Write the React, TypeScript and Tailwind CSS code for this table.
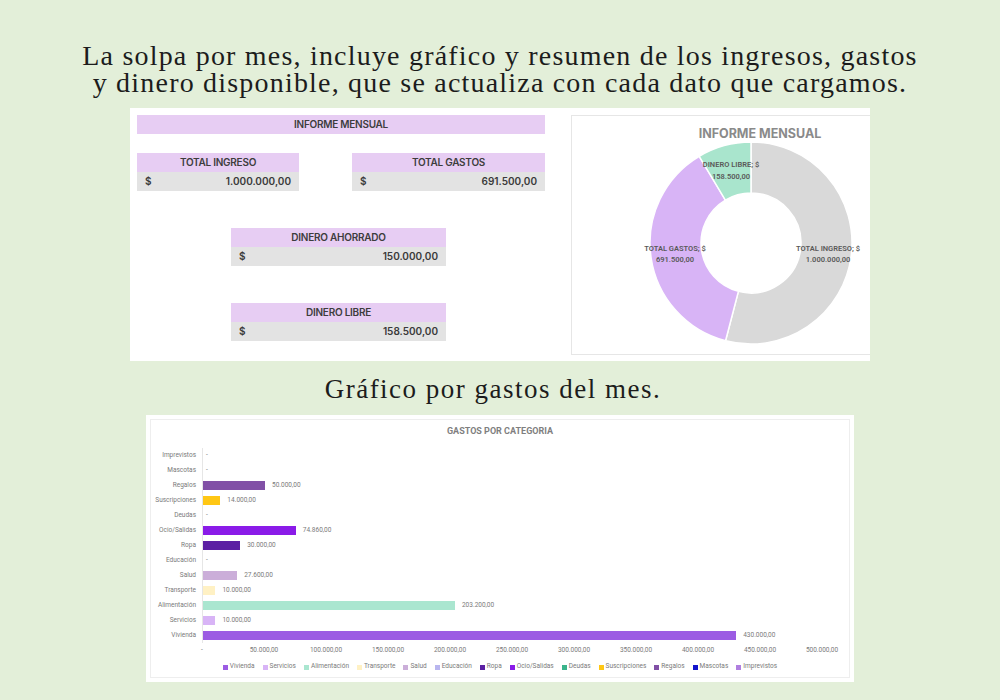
const categories = [
  { name: 'Imprevistos', value: 0, color: '#b07fe0' },
  { name: 'Mascotas', value: 0, color: '#1414cc' },
  { name: 'Regalos', value: 50000, color: '#8150a6' },
  { name: 'Suscripciones', value: 14000, color: '#ffc714' },
  { name: 'Deudas', value: 0, color: '#3bb48b' },
  { name: 'Ocio/Salidas', value: 74860, color: '#8a1be8' },
  { name: 'Ropa', value: 30000, color: '#5b1fa3' },
  { name: 'Educación', value: 0, color: '#b9b6ef' },
  { name: 'Salud', value: 27600, color: '#cbaed9' },
  { name: 'Transporte', value: 10000, color: '#fff1c4' },
  { name: 'Alimentación', value: 203200, color: '#aae6d0' },
  { name: 'Servicios', value: 10000, color: '#d8b4f6' },
  { name: 'Vivienda', value: 430000, color: '#9c5ce3' },
];

const ticks = [0, 50000, 100000, 150000, 200000, 250000, 300000, 350000, 400000, 450000, 500000];
const PX = 620 / 500000;

function fmt(n: number) {
  const int = Math.floor(n).toString().replace(/\B(?=(\d{3})+(?!\d))/g, '.');
  return `${int},00`;
}

function arcPath(cx: number, cy: number, r0: number, r1: number, a0: number, a1: number) {
  const pt = (r: number, a: number) => {
    const rad = (a * Math.PI) / 180;
    return [cx + r * Math.sin(rad), cy - r * Math.cos(rad)];
  };
  const large = a1 - a0 > 180 ? 1 : 0;
  const [x1, y1] = pt(r1, a0);
  const [x2, y2] = pt(r1, a1);
  const [x3, y3] = pt(r0, a1);
  const [x4, y4] = pt(r0, a0);
  return `M${x1} ${y1} A${r1} ${r1} 0 ${large} 1 ${x2} ${y2} L${x3} ${y3} A${r0} ${r0} 0 ${large} 0 ${x4} ${y4} Z`;
}

function Card({ title, value, className }: { title: string; value: string; className: string }) {
  return (
    <div className={className}>
      <div className="h-[19px] bg-[#e7cdf3] flex items-center justify-center text-[10px] font-semibold text-[#3d3d3d] tracking-tight">
        {title}
      </div>
      <div className="h-[19px] bg-[#e3e3e3] flex items-center justify-between px-[8px] text-[10px] font-semibold text-[#3a3a3a]">
        <span>$</span>
        <span>{value}</span>
      </div>
    </div>
  );
}

function Donut() {
  const total = 1000000 + 691500 + 158500;
  const a1 = (1000000 / total) * 360;
  const a2 = a1 + (691500 / total) * 360;
  const cx = 179;
  const cy = 127;
  return (
    <svg width="298" height="240" viewBox="0 0 298 240" className="block">
      <text x="188" y="22" textAnchor="middle" className="fill-[#8a8a8a] text-[12.5px] font-bold">
        INFORME MENSUAL
      </text>
      <path d={arcPath(cx, cy, 50, 101, 0, a1)} fill="#d9d9d9" stroke="#fff" strokeWidth="1.5" />
      <path d={arcPath(cx, cy, 50, 101, a1, a2)} fill="#d8b4f6" stroke="#fff" strokeWidth="1.5" />
      <path d={arcPath(cx, cy, 50, 101, a2, 360)} fill="#a9e5cd" stroke="#fff" strokeWidth="1.5" />
      <g className="fill-[#595959] text-[7.5px] font-semibold font-['Roboto',sans-serif]">
        <text x="256" y="135" textAnchor="middle">TOTAL INGRESO; $</text>
        <text x="256" y="146" textAnchor="middle">1.000.000,00</text>
        <text x="103" y="135" textAnchor="middle">TOTAL GASTOS; $</text>
        <text x="103" y="146" textAnchor="middle">691.500,00</text>
        <text x="159" y="51" textAnchor="middle">DINERO LIBRE; $</text>
        <text x="159" y="63" textAnchor="middle">158.500,00</text>
      </g>
    </svg>
  );
}

function BarChart() {
  return (
    <div className="w-[708px] h-[267px] bg-white p-[4px]">
      <div className="h-full border border-[#eeeeee] font-['Roboto',sans-serif] text-[#7a7a7a]">
        <div className="pt-[6px] h-[16px] leading-[10px] text-center text-[9px] font-bold text-[#7f7f7f]">
          GASTOS POR CATEGORIA
        </div>
        <div className="mt-[12px] flex">
          <div className="w-[45px] flex flex-col">
            {categories.map((c) => (
              <div key={c.name} className="h-[15px] flex items-center justify-end text-[6.5px] whitespace-nowrap">
                {c.name}
              </div>
            ))}
          </div>
          <div className="ml-[6px] border-l border-[#e6e6e6] flex flex-col flex-1">
            {categories.map((c) => (
              <div key={c.name} className="h-[15px] flex items-center">
                {c.value > 0 && (
                  <div className="h-[9px]" style={{ width: c.value * PX, backgroundColor: c.color }} />
                )}
                <span className={`text-[6.5px] whitespace-nowrap ${c.value > 0 ? 'ml-[7px]' : 'ml-[3px]'}`}>
                  {c.value > 0 ? fmt(c.value) : '-'}
                </span>
              </div>
            ))}
          </div>
        </div>
        <div className="relative mt-[2px] h-[10px] ml-[51px]">
          {ticks.map((t) => (
            <span
              key={t}
              className="absolute top-0 -translate-x-1/2 text-[6.5px] leading-[10px] whitespace-nowrap"
              style={{ left: t * PX }}
            >
              {t === 0 ? '-' : fmt(t)}
            </span>
          ))}
        </div>
        <div className="mt-[7px] h-[10px] flex items-center justify-center gap-[8px] text-[6.5px]">
          {[...categories].reverse().map((c) => (
            <div key={c.name} className="flex items-center gap-[2px] whitespace-nowrap">
              <span className="w-[5px] h-[5px]" style={{ backgroundColor: c.color }} />
              <span>{c.name}</span>
            </div>
          ))}
        </div>
      </div>
    </div>
  );
}

export default function App() {
  return (
    <div className="w-[1000px] h-[700px] bg-[#e3efd9] flex flex-col items-center overflow-hidden">
      <h1 className="pt-[42px] text-center text-[28px] leading-[27px] tracking-[1.2px] text-[#1c1c1c] font-['Liberation_Serif',serif] font-normal">
        <span className="block">La solpa por mes, incluye gráfico y resumen de los ingresos, gastos</span>
        <span className="block">y dinero disponible, que se actualiza con cada dato que cargamos.</span>
      </h1>

      <div className="mt-[12px] w-[740px] h-[253px] bg-white flex font-['Inter',sans-serif]">
        <div className="w-[442px] pl-[7px] pt-[7px]">
          <div className="w-[408px] h-[19px] bg-[#e7cdf3] flex items-center justify-center text-[10px] font-semibold text-[#3d3d3d] tracking-tight">
            INFORME MENSUAL
          </div>
          <div className="mt-[19px] w-[408px] flex justify-between">
            <Card title="TOTAL INGRESO" value="1.000.000,00" className="w-[162px]" />
            <Card title="TOTAL GASTOS" value="691.500,00" className="w-[193px]" />
          </div>
          <Card title="DINERO AHORRADO" value="150.000,00" className="mt-[37px] ml-[94px] w-[215px]" />
          <Card title="DINERO LIBRE" value="158.500,00" className="mt-[37px] ml-[94px] w-[215px]" />
        </div>
        <div className="mt-[7px] h-[240px] flex-1 border-t border-l border-b border-[#e6e6e6]">
          <Donut />
        </div>
      </div>

      <h2 className="mt-[15px] mr-[14px] text-center text-[27px] leading-[26px] tracking-[1.5px] text-[#1c1c1c] font-['Liberation_Serif',serif]">
        Gráfico por gastos del mes.
      </h2>

      <div className="mt-[13px]">
        <BarChart />
      </div>
    </div>
  );
}
